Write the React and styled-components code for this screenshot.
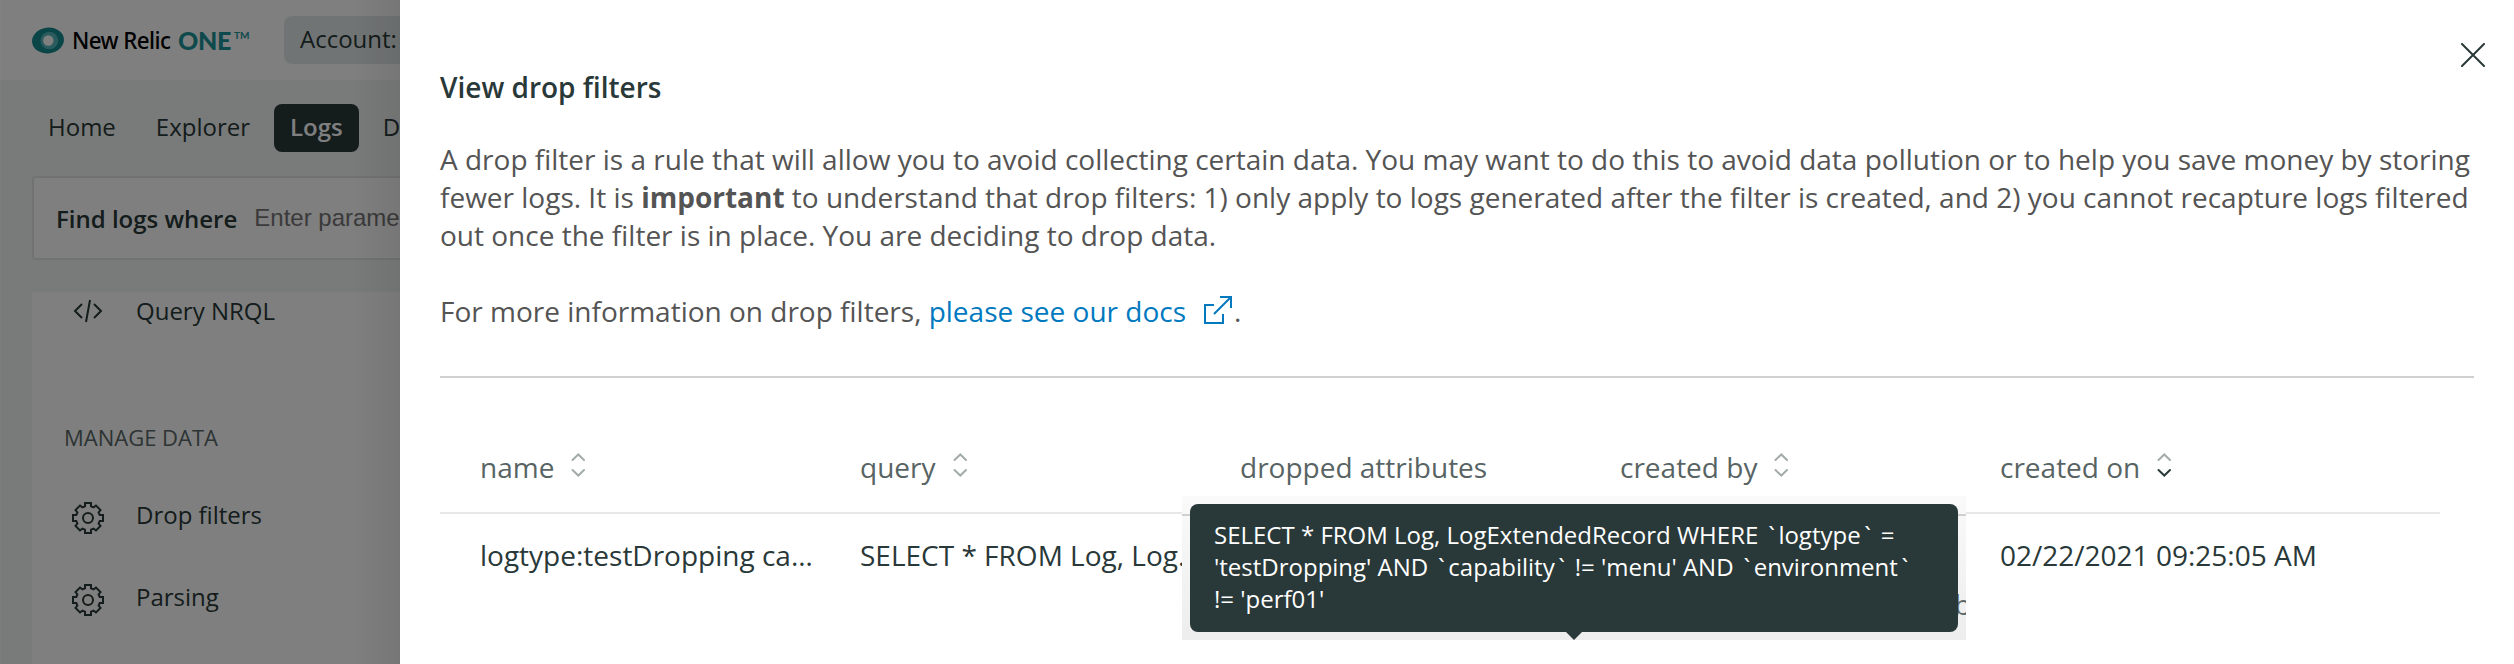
import React from "react";
import styled, { createGlobalStyle } from "styled-components";

const Global = createGlobalStyle`
  * { box-sizing: border-box; }
  body { margin: 0; font-family: "Open Sans", "Noto Sans", sans-serif; font-size: 28px; color: #293838; background: #fff; overflow: hidden; }
  svg { display: block; flex: none; }
`;

const Page = styled.div`
  display: flex;
  width: 2514px;
  height: 664px;
  overflow: hidden;
`;

const Underlay = styled.div`
  position: relative;
  display: flex;
  flex-direction: column;
  width: 400px;
  height: 664px;
  flex: none;
  overflow: hidden;
  white-space: nowrap;
  background: #f3f6f5;
`;

const Shade = styled.div`
  position: absolute;
  inset: 0;
  border-left: 1px solid rgba(255, 255, 255, 0.08);
  background:
    linear-gradient(to right, rgba(0, 0, 0, 0) 350px, rgba(0, 0, 0, 0.07) 400px),
    rgba(0, 0, 0, 0.5);
`;

const TopBar = styled.div`
  display: flex;
  align-items: center;
  height: 80px;
  flex: none;
  padding-left: 32px;
  background: #fff;
`;

const Brand = styled.div`
  display: flex;
  align-items: center;
  width: 252px;
  flex: none;
  padding-top: 1px;
  font-size: 24px;
  color: #000;
`;

const BrandName = styled.span`
  width: 99px;
  margin: -3px 0 0 8px;
  font-family: "Noto Sans", sans-serif;
  font-weight: 500;
  letter-spacing: -0.6px;
  transform: scaleX(0.93);
  transform-origin: left center;
`;

const BrandOne = styled.span`
  margin: -1px 0 0 7px;
  font-family: Lato, sans-serif;
  font-size: 25px;
  font-weight: 900;
  letter-spacing: -0.3px;
  color: #1c9399;
`;

const Trademark = styled.span`
  margin: -12px 0 0 3px;
  font-family: Lato, sans-serif;
  font-size: 10px;
  font-weight: 700;
  color: #1c9399;
`;

const AccountButton = styled.div`
  display: flex;
  align-items: center;
  width: 240px;
  height: 48px;
  flex: none;
  padding: 0 0 3px 16px;
  border-radius: 8px;
  background: #e3e9e8;
  font-size: 24px;
`;

const Nav = styled.div`
  display: flex;
  align-items: center;
  gap: 8px;
  height: 96px;
  flex: none;
  padding-left: 32px;
`;

const NavItem = styled.div`
  display: flex;
  align-items: center;
  height: 48px;
  flex: none;
  padding: 0 16px 3px;
  border-radius: 8px;
  font-size: 24px;
  font-weight: ${(p) => (p.$active ? 600 : 400)};
  color: ${(p) => (p.$active ? "#fff" : "#293838")};
  background: ${(p) => (p.$active ? "#293838" : "none")};
`;

const SearchBar = styled.div`
  display: flex;
  align-items: center;
  width: 600px;
  height: 84px;
  flex: none;
  margin-left: 32px;
  padding-left: 22px;
  border: 2px solid #e3e4e4;
  border-radius: 4px;
  background: #fff;
`;

const SearchLabel = styled.span`
  font-size: 24px;
  font-weight: 600;
`;

const SearchHint = styled.span`
  margin: -1px 0 0 17px;
  font-family: "Liberation Sans", Arial, sans-serif;
  font-size: 24px;
  color: #757575;
`;

const SideMenu = styled.div`
  display: flex;
  flex-direction: column;
  width: 600px;
  flex: 1;
  margin: 32px 0 0 32px;
  background: #fff;
`;

const MenuItem = styled.div`
  display: flex;
  align-items: flex-start;
  height: 38px;
  flex: none;
  margin-bottom: ${(p) => p.$after || 0}px;
  padding-left: 40px;
  gap: 32px;
`;

const MenuIcon = styled.div`
  padding-top: ${(p) => p.$top}px;
`;

const MenuLabel = styled.span`
  padding-top: 2px;
  font-size: 24px;
  line-height: 33px;
`;

const MenuHeading = styled.div`
  height: 30px;
  flex: none;
  margin-bottom: 44px;
  padding-left: 32px;
  font-size: 22px;
  line-height: 30px;
  color: #5a6868;
`;

const Panel = styled.div`
  position: relative;
  width: 2114px;
  padding: 67px 40px 0;
`;

const CloseButton = styled.div`
  position: absolute;
  top: 43px;
  right: 29px;
`;

const Title = styled.h1`
  margin: 0;
  font-size: 28px;
  font-weight: 600;
  line-height: 40px;
`;

const Paragraph = styled.p`
  margin: ${(p) => p.$top}px 0 0;
  height: ${(p) => p.$lines * 38}px;
  line-height: 38px;
  color: #545454;
  white-space: nowrap;
`;

const Strong = styled.strong`
  font-weight: 700;
`;

const DocsLink = styled.a`
  display: inline-flex;
  align-items: center;
  gap: 18px;
  margin-right: 2px;
  color: #0079bf;

  svg { margin-bottom: 2px; }
`;

const Rule = styled.div`
  height: 2px;
  margin-top: 46px;
  background: #d0d0d0;
`;

const Table = styled.div`
  width: 2000px;
`;

const Row = styled.div`
  display: grid;
  grid-template-columns: 380px 380px 380px 380px 1fr;
  padding-left: 40px;
`;

const HeadRow = styled(Row)`
  height: 136px;
  padding-top: 69px;
  border-bottom: 2px solid #e8e8e8;
  color: #586464;
`;

const HeadCell = styled.div`
  display: flex;
  align-items: center;
  height: 40px;
  gap: 16px;

  svg { margin-bottom: 4px; }
`;

const BodyRow = styled(Row)`
  padding-top: 21px;
`;

const Cell = styled.div`
  width: 340px;
  line-height: 40px;
  overflow: hidden;
  white-space: nowrap;
  text-overflow: ellipsis;
`;

const TooltipLayer = styled.div`
  position: absolute;
  left: 782px;
  top: 496px;
  width: 784px;
  height: 144px;
  padding: 8px;
  overflow: hidden;
  background: linear-gradient(#fafafa, #f6f6f6 30%, #ededed);
`;

const LayerLine = styled.div`
  position: absolute;
  left: 0;
  right: 0;
  top: 18px;
  height: 2px;
  background: #cfcfcf;
`;

const LayerText = styled.div`
  position: absolute;
  left: 772px;
  top: 89px;
  line-height: 38px;
  color: #5b6767;
`;

const Tooltip = styled.div`
  position: relative;
  height: 128px;
  padding: 15px 24px;
  border-radius: 8px;
  background: #293838;
  color: #fff;
  font-size: 24px;
  line-height: 32px;
  white-space: nowrap;
`;

const Tick = styled.span`
  display: inline-block;
  width: 13.85px;
  text-align: center;
`;

const TooltipArrow = styled.div`
  position: absolute;
  left: 384px;
  bottom: 0;
  border: 8px solid transparent;
  border-top-color: #293838;
  border-bottom: 0;
`;

const Logo = () => (
  <svg width="32" height="27" viewBox="0 0 32 27">
    <ellipse cx="16" cy="13.5" rx="16" ry="12.8" transform="rotate(-8 16 13.5)" fill="#158a90" />
    <circle cx="17.3" cy="13.5" r="8.8" fill="#70ccd3" opacity=".7" />
    <circle cx="16.3" cy="13.5" r="5.2" fill="#fff" />
  </svg>
);

const CodeIcon = () => (
  <svg width="32" height="32" viewBox="0 0 32 32" fill="none" stroke="#293838" strokeWidth="2">
    <path d="M10 9 3 16l7 7M22 9l7 7-7 7M18 5l-4 22" />
  </svg>
);

const GearIcon = () => (
  <svg width="32" height="32" viewBox="0 0 32 32" fill="none" stroke="#293838" strokeWidth="2">
    <circle cx="16" cy="16" r="5" />
    <path d="M13 1h6v3.300l2.600 1.100L24 3.500l4.500 4.500-1.900 2.400L27.700 13H31v6h-3.300l-1.100 2.600L28.500 24l-4.500 4.500-2.400-1.900L19 27.700V31h-6v-3.300l-2.600-1.100L8 28.500 3.500 24l1.900-2.400L4.300 19H1v-6h3.300l1.100-2.600L3.500 8 8 3.500l2.400 1.900L13 4.300Z" />
  </svg>
);

const CloseIcon = () => (
  <svg width="24" height="24" viewBox="0 0 24 24" fill="none" stroke="#293838" strokeWidth="2" strokeLinecap="round">
    <path d="M1 1l22 22M23 1 1 23" />
  </svg>
);

const ExternalIcon = () => (
  <svg width="28" height="28" viewBox="0 0 28 28" fill="none" stroke="#0079bf" strokeWidth="2">
    <path d="M10 9H1v18h18v-9M16 1h11v11M27 1 10 18" />
  </svg>
);

const SortIcon = ({ active }) => (
  <svg width="16" height="26" viewBox="0 0 16 26" fill="none" strokeWidth="2" stroke="#a3abab" strokeLinecap="round">
    <path d="M2.500 8 8.300 2.500 14 8" />
    <path d="M2.500 18 8.300 23.500 14 18" stroke={active ? "#293838" : "#a3abab"} />
  </svg>
);

const columns = [
  { label: "name", sort: true },
  { label: "query", sort: true },
  { label: "dropped attributes" },
  { label: "created by", sort: true },
  { label: "created on", sort: true, active: true },
];

export default function App() {
  return (
    <>
      <Global />
      <Page>
        <Underlay>
          <TopBar>
            <Brand>
              <Logo />
              <BrandName>New Relic</BrandName>
              <BrandOne>ONE</BrandOne>
              <Trademark>TM</Trademark>
            </Brand>
            <AccountButton>Account:</AccountButton>
          </TopBar>
          <Nav>
            <NavItem>Home</NavItem>
            <NavItem>Explorer</NavItem>
            <NavItem $active>Logs</NavItem>
            <NavItem>Dashboards</NavItem>
          </Nav>
          <SearchBar>
            <SearchLabel>Find logs where</SearchLabel>
            <SearchHint>Enter parameters</SearchHint>
          </SearchBar>
          <SideMenu>
            <MenuItem $after={92}>
              <MenuIcon $top={3}><CodeIcon /></MenuIcon>
              <MenuLabel>Query NRQL</MenuLabel>
            </MenuItem>
            <MenuHeading>MANAGE DATA</MenuHeading>
            <MenuItem $after={44}>
              <MenuIcon $top={6}><GearIcon /></MenuIcon>
              <MenuLabel>Drop filters</MenuLabel>
            </MenuItem>
            <MenuItem>
              <MenuIcon $top={6}><GearIcon /></MenuIcon>
              <MenuLabel>Parsing</MenuLabel>
            </MenuItem>
          </SideMenu>
          <Shade />
        </Underlay>
        <Panel>
          <CloseButton><CloseIcon /></CloseButton>
          <Title>View drop filters</Title>
          <Paragraph $top={33} $lines={3}>
            A drop filter is a rule that will allow you to avoid collecting certain data. You may want to do this to avoid data pollution or to help you save money by storing<br />
            fewer logs. It is <Strong>important</Strong> to understand that drop filters: 1) only apply to logs generated after the filter is created, and 2) you cannot recapture logs filtered<br />
            out once the filter is in place. You are deciding to drop data.
          </Paragraph>
          <Paragraph $top={38} $lines={1}>
            For more information on drop filters, <DocsLink>please see our docs <ExternalIcon /></DocsLink>.
          </Paragraph>
          <Rule />
          <Table>
            <HeadRow>
              {columns.map((c) => (
                <HeadCell key={c.label}>
                  {c.label}
                  {c.sort && <SortIcon active={c.active} />}
                </HeadCell>
              ))}
            </HeadRow>
            <BodyRow>
              <Cell>logtype:testDropping capability</Cell>
              <Cell>SELECT * FROM Log, LogExtendedRecord</Cell>
              <Cell />
              <Cell />
              <Cell>02/22/2021 09:25:05 AM</Cell>
            </BodyRow>
          </Table>
          <TooltipLayer>
            <LayerLine />
            <LayerText>b</LayerText>
            <Tooltip>
              SELECT * FROM Log, LogExtendedRecord WHERE <Tick>`</Tick>logtype<Tick>`</Tick> =<br />
              'testDropping' AND <Tick>`</Tick>capability<Tick>`</Tick> != 'menu' AND <Tick>`</Tick>environment<Tick>`</Tick><br />
              != 'perf01'
            </Tooltip>
            <TooltipArrow />
          </TooltipLayer>
        </Panel>
      </Page>
    </>
  );
}
